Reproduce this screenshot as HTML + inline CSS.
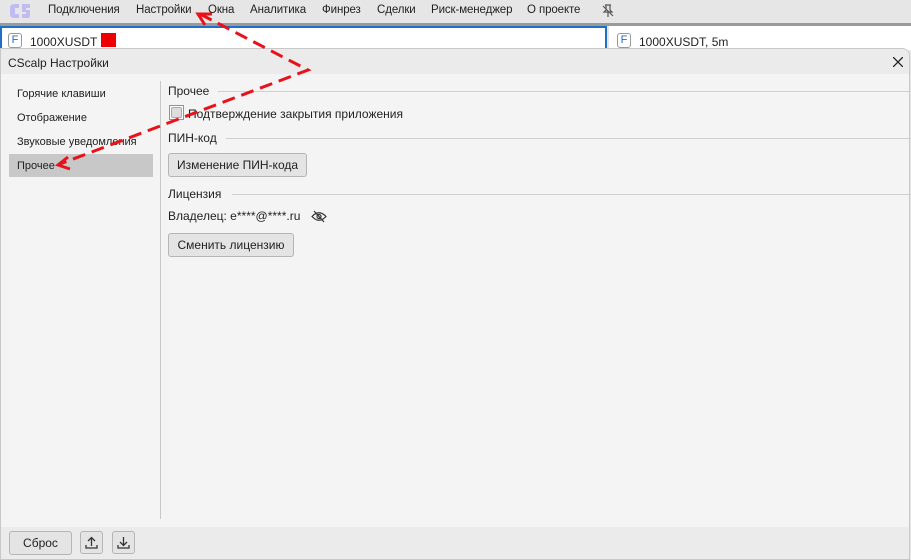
<!DOCTYPE html>
<html><head><meta charset="utf-8"><style>
*{margin:0;padding:0;box-sizing:border-box}
body{width:911px;height:560px;overflow:hidden;background:#e6e6e6;font-family:"Liberation Sans",sans-serif;font-size:12px;color:#222;position:relative}
.a{position:absolute}
.menu span{position:absolute;top:4px;font-size:11.5px;letter-spacing:-0.1px}
.btn{position:absolute;background:#e4e4e4;border:1px solid #b5b5b5;border-radius:3px;font-size:12px;text-align:center}
.sec{position:absolute;left:168px;font-size:12px}
.line{position:absolute;height:1px;background:#d0d0d0;right:0}
</style></head><body>
<svg class="a" style="left:8px;top:2px" width="24" height="18" viewBox="0 0 24 18"><path d="M11 2H6Q2 2 2 6v6q0 4 4 4h5v-4H7V6h4Z" fill="#c0bcf0"/><path d="M22 2h-8v8h4v2h-4v4h6q2 0 2-3V8h-4V6h4Z" fill="#c0bcf0"/></svg>
<div class="menu">
<span style="left:48px">Подключения</span><span style="left:136px">Настройки</span><span style="left:208px">Окна</span><span style="left:250px">Аналитика</span><span style="left:322px">Финрез</span><span style="left:377px">Сделки</span><span style="left:431px">Риск-менеджер</span><span style="left:527px">О проекте</span>
</div>
<svg class="a" style="left:601px;top:4px" width="14" height="14" viewBox="0 0 14 14" fill="none" stroke="#555" stroke-width="1.2"><path d="M4 1h6M5 1v5l-2 2h8l-2-2V1M7 8v5M2 2l10 10"/></svg>
<div class="a" style="left:0;top:23px;width:911px;height:3px;background:#9a9a9a"></div>
<div class="a" style="left:0;top:26px;width:607px;height:24px;background:#fff;border:2px solid #1e6fc8;border-bottom:none"></div>
<div class="a" style="left:609px;top:26px;width:302px;height:24px;background:#fff"></div>
<div class="a" style="left:8px;top:33px;width:14px;height:15px;border:1px solid #999;border-radius:3px;color:#1e6fc8;font-size:11px;text-align:center;line-height:13px">F</div>
<div class="a" style="left:30px;top:35px;font-size:12px">1000XUSDT</div>
<div class="a" style="left:101px;top:33px;width:15px;height:14px;background:#e00"></div>
<div class="a" style="left:617px;top:33px;width:14px;height:15px;border:1px solid #999;border-radius:3px;color:#1e6fc8;font-size:11px;text-align:center;line-height:13px">F</div>
<div class="a" style="left:639px;top:35px;font-size:12px">1000XUSDT, 5m</div>
<div class="a" style="left:0;top:48px;width:910px;height:512px;background:#f4f4f4;border:1px solid #c8c8c8;border-radius:0 8px 0 0;overflow:hidden">
 <div class="a" style="left:0;top:0;width:910px;height:25px;background:#ebebeb"></div>
 <div class="a" style="left:7px;top:7px;font-size:12px">CScalp Настройки</div>
 <svg class="a" style="left:892px;top:8px" width="10" height="10" stroke="#222" stroke-width="1.3"><path d="M0 0L10 10M10 0L0 10"/></svg>
 <div class="a" style="left:159px;top:32px;width:1px;height:438px;background:#c8c8c8"></div>
 <div class="a" style="left:8px;top:105px;width:144px;height:23px;background:#c8c8c8"></div>
 <div class="a" style="left:16px;top:39px;font-size:11px">Горячие клавиши</div>
 <div class="a" style="left:16px;top:63px;font-size:11px">Отображение</div>
 <div class="a" style="left:16px;top:87px;font-size:11px">Звуковые уведомления</div>
 <div class="a" style="left:16px;top:111px;font-size:11px">Прочее</div>
 <div class="a" style="left:0;top:478px;width:910px;height:34px;background:#ebebeb"></div>
</div>
<div class="sec" style="top:84px">Прочее</div><div class="line" style="left:218px;top:91px"></div>
<div class="a" style="left:169px;top:105px;width:15px;height:15px;border:1px solid #9b7fe6;background:#fff"><div style="margin:1px;width:11px;height:11px;background:#ddd;border:1px solid #aaa;border-radius:2px"></div></div>
<div class="sec" style="left:188px;top:107px">Подтверждение закрытия приложения</div>
<div class="sec" style="top:131px">ПИН-код</div><div class="line" style="left:226px;top:138px"></div>
<div class="btn" style="left:168px;top:153px;width:139px;height:24px;line-height:22px">Изменение ПИН-кода</div>
<div class="sec" style="top:187px">Лицензия</div><div class="line" style="left:232px;top:194px"></div>
<div class="sec" style="top:209px">Владелец: e****@****.ru</div>
<svg class="a" style="left:311px;top:210px" width="16" height="13" viewBox="0 0 16 13" fill="none" stroke="#333" stroke-width="1.2"><path d="M1 6.5Q8 -1 15 6.5Q8 14 1 6.5Z"/><circle cx="8" cy="6.5" r="2"/><path d="M3 1l10 11"/></svg>
<div class="btn" style="left:168px;top:233px;width:126px;height:24px;line-height:22px">Сменить лицензию</div>
<div class="btn" style="left:9px;top:531px;width:63px;height:24px;line-height:22px">Сброс</div>
<div class="btn" style="left:80px;top:531px;width:23px;height:23px"></div>
<div class="btn" style="left:112px;top:531px;width:23px;height:23px"></div>
<svg class="a" style="left:80px;top:531px" width="56" height="24" fill="none" stroke="#333" stroke-width="1.3"><path d="M11.5 15V7M8 10l3.5-3.5L15 10M6 14v3h11v-3"/><path d="M43.5 6v8M40 11l3.5 3.5L47 11M38 14v3h11v-3"/></svg>
<svg class="a" style="left:0;top:0" width="911" height="560" fill="none">
<polyline points="200,14 308,70 60,164" stroke="#e8121a" stroke-width="3" stroke-dasharray="13,7"/>
<path d="M212,14 L198,14 L205,25" stroke="#e8121a" stroke-width="3"/>
<path d="M68,157 L58,165 L70,169" stroke="#e8121a" stroke-width="3"/>
</svg>
</body></html>
